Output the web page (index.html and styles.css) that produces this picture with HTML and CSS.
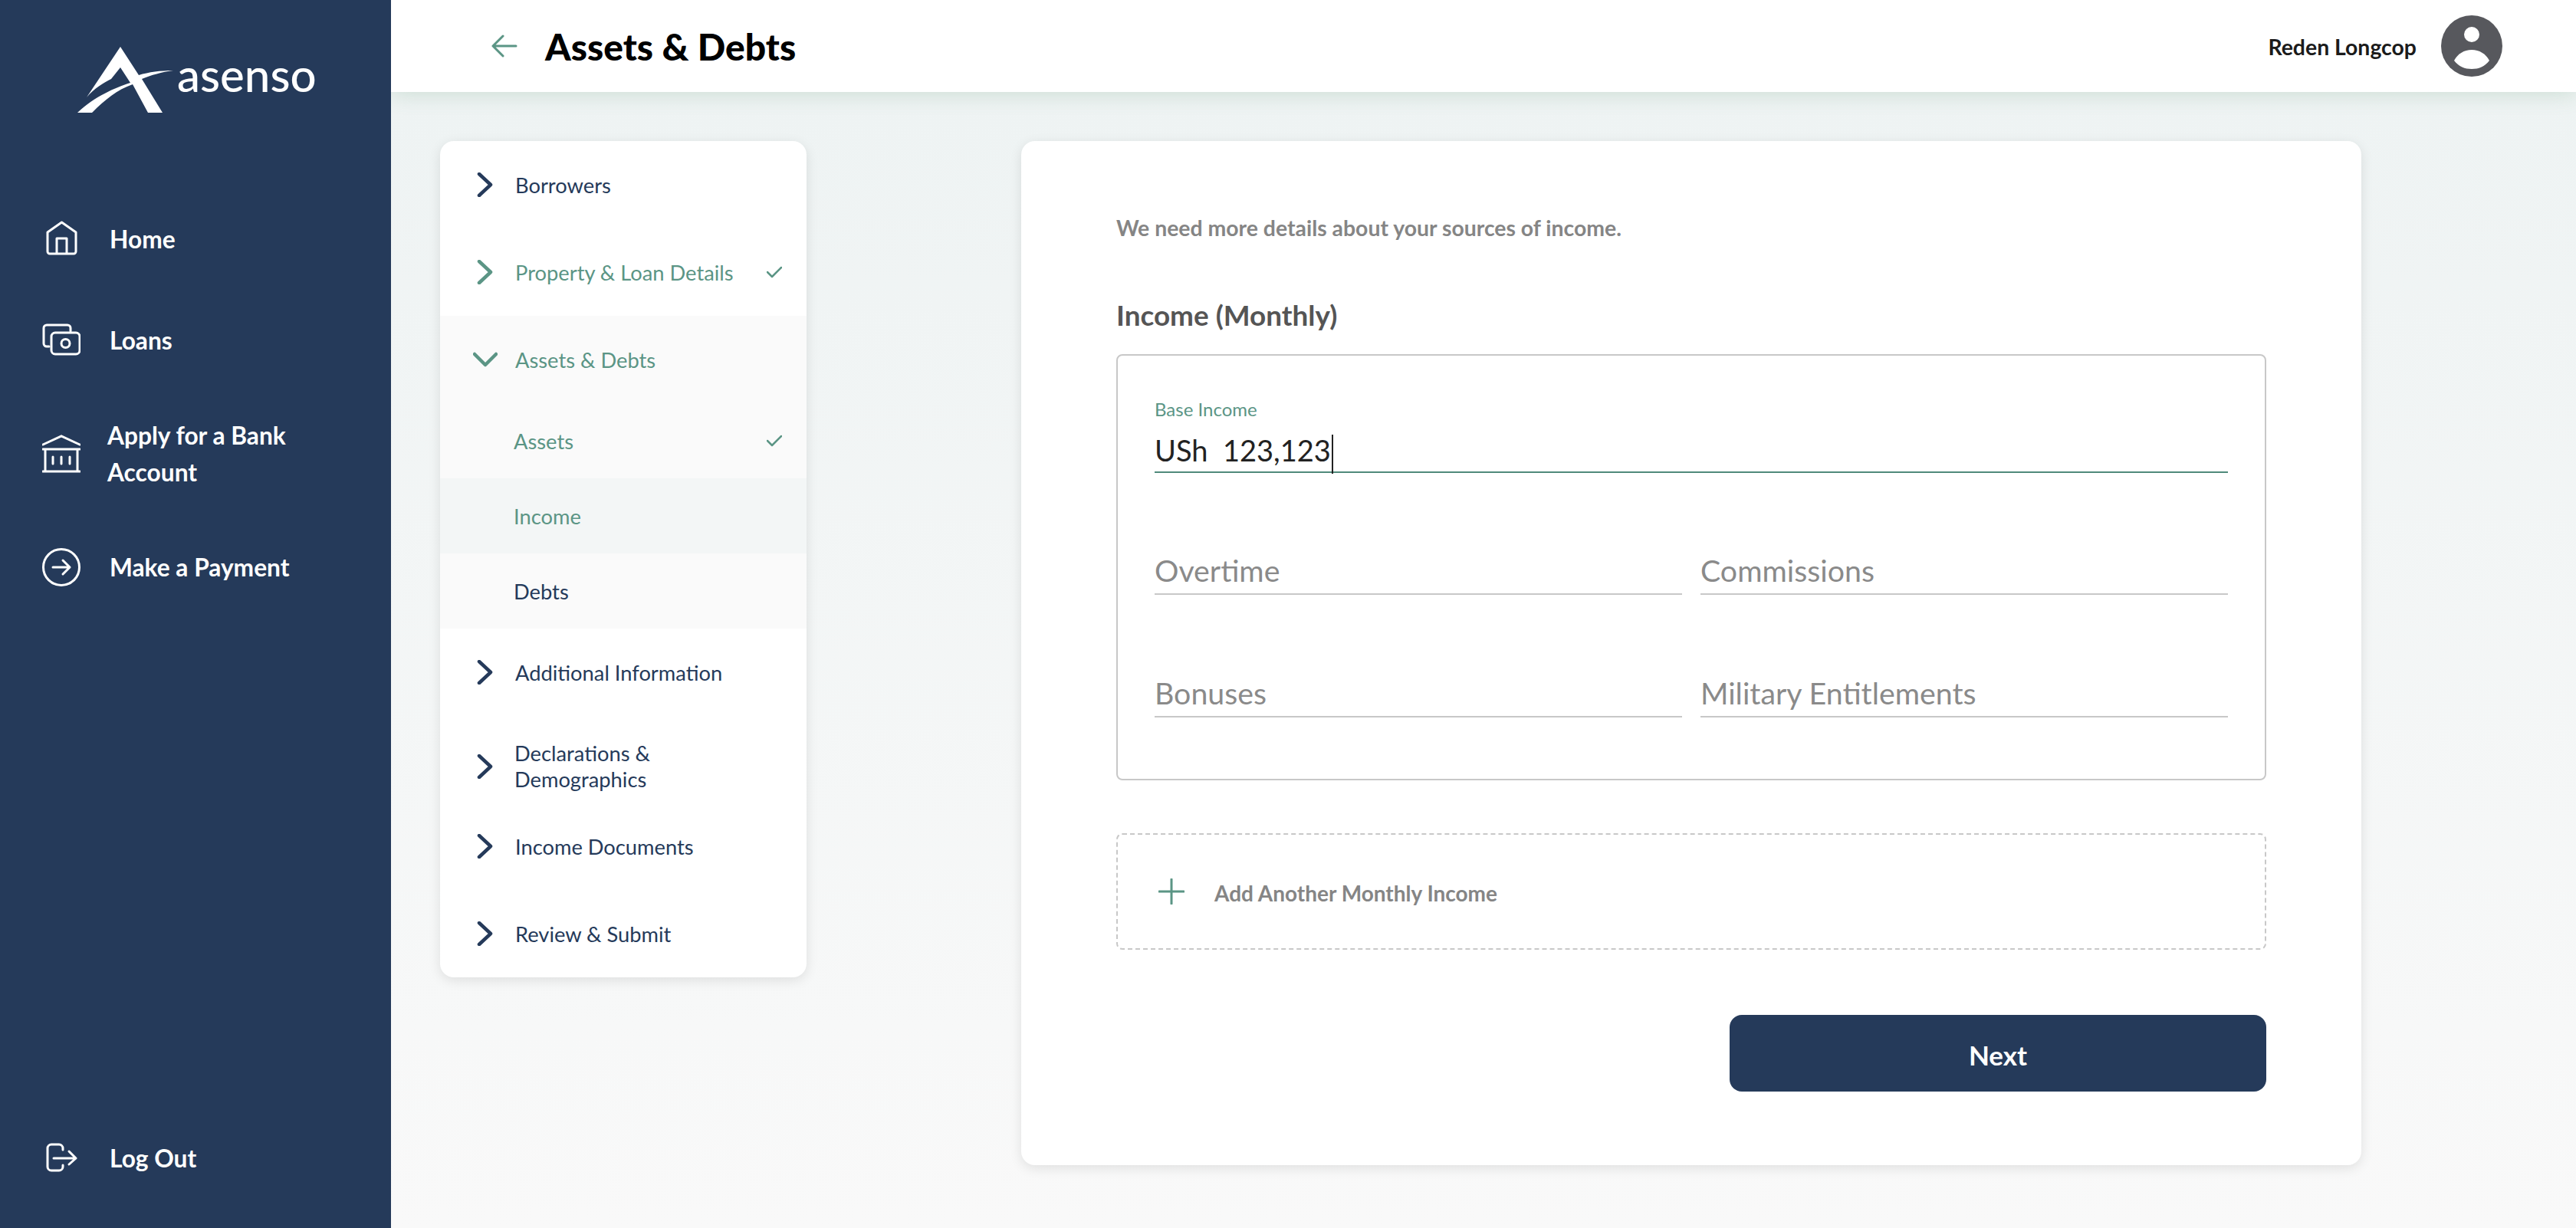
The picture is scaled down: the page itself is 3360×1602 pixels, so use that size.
FILE: index.html
```html
<!DOCTYPE html>
<html lang="en">
<head>
  <meta charset="UTF-8" />
  <title>Assets &amp; Debts</title>
  <link rel="stylesheet" href="styles.css">
</head>
<body>

  <aside class="sidebar">
    <div class="logo">
      <svg class="logo-mark" viewBox="0 0 125 86" width="125" height="86">
        <path fill="#fff" d="M56 0 L12 66 C22 54 34 47 44 42 L56 27 L69 47 C48 54 24 64 0 86 L19 86 C36 69 52 56 72 49 L92 86 L111 86 L84 42 C96 37 110 33 125 31 C108 31 93 33 80 37 Z"/>
      </svg>
      <span class="logo-text">asenso</span>
    </div>

    <nav class="main-nav">
      <a class="nav-item nav-home">
        <svg class="nav-icon" viewBox="0 0 50 50" width="50" height="50" fill="none" stroke="#fff" stroke-width="3" stroke-linejoin="round">
          <path d="M25.500 3 L44 16 V41 a3 3 0 0 1 -3 3 H10 a3 3 0 0 1 -3 -3 V16 Z"/>
          <path d="M19 44 V24 H32 V44"/>
        </svg>
        <span>Home</span>
      </a>
      <a class="nav-item nav-loans">
        <svg class="nav-icon" viewBox="0 0 50 50" width="50" height="50" fill="none" stroke="#fff" stroke-width="3" stroke-linecap="round">
          <path d="M9 33 H6 a4 4 0 0 1 -4 -4 V9 a4 4 0 0 1 4 -4 H33 a4 4 0 0 1 4 4 V13"/>
          <rect x="12" y="15" width="37" height="28" rx="5"/>
          <circle cx="30.5" cy="29" r="5.5"/>
        </svg>
        <span>Loans</span>
      </a>
      <a class="nav-item nav-bank">
        <svg class="nav-icon" viewBox="0 0 50 50" width="50" height="50" fill="none" stroke="#fff" stroke-width="3" stroke-linecap="round">
          <path d="M1 13 L25 2 L49 13"/>
          <path d="M1 19 H49 M4 19 V48 M46 19 V48 M1 48 H49"/>
          <path d="M14 29 V38 M25 29 V38 M36 29 V38"/>
        </svg>
        <span class="nav-wrap">Apply for a Bank Account</span>
      </a>
      <a class="nav-item nav-pay">
        <svg class="nav-icon" viewBox="0 0 50 50" width="50" height="50" fill="none" stroke="#fff" stroke-width="3" stroke-linecap="round" stroke-linejoin="round">
          <circle cx="25" cy="25" r="23.5"/>
          <path d="M14 25 H36 M27 16 L36 25 L27 34"/>
        </svg>
        <span>Make a Payment</span>
      </a>
    </nav>

    <a class="nav-item nav-logout">
      <svg class="nav-icon" viewBox="0 0 50 50" width="50" height="50" fill="none" stroke="#fff" stroke-width="3" stroke-linecap="round" stroke-linejoin="round">
        <path d="M27 14 V12 a5 5 0 0 0 -5 -5 H12 a5 5 0 0 0 -5 5 V36 a5 5 0 0 0 5 5 H22 a5 5 0 0 0 5 -5 V34"/>
        <path d="M15 25 H44 M35 16 L44 25 L35 33"/>
      </svg>
      <span>Log Out</span>
    </a>
  </aside>

  <div class="page">
    <header class="topbar">
      <svg class="back" viewBox="0 0 34 30" width="34" height="30" fill="none" stroke="#5b9585" stroke-width="3" stroke-linecap="round" stroke-linejoin="round">
        <path d="M32 15 H2 M15 2 L2 15 L15 28"/>
      </svg>
      <h1>Assets &amp; Debts</h1>
      <div class="user">
        <span class="user-name">Reden Longcop</span>
        <svg viewBox="0 0 80 80" width="80" height="80">
          <circle cx="40" cy="40" r="40" fill="#57585d"/>
          <circle cx="40" cy="25" r="10" fill="#fff"/>
          <path fill="#fff" d="M17 59 C22 50 30 45 40 45 C50 45 58 50 63 59 C57 67 49 70 40 70 C31 70 23 67 17 59 Z"/>
        </svg>
      </div>
    </header>

    <div class="content">
      <ul class="steps">
        <li class="step"><svg class="chev"><use href="#chev-right"/></svg>Borrowers</li>
        <li class="step done"><svg class="chev"><use href="#chev-right"/></svg>Property &amp; Loan Details<svg class="check"><use href="#check"/></svg></li>
        <li class="step done open"><svg class="chev"><use href="#chev-down"/></svg>Assets &amp; Debts</li>
        <li class="sub done first">Assets<svg class="check"><use href="#check"/></svg></li>
        <li class="sub current">Income</li>
        <li class="sub">Debts</li>
        <li class="step"><svg class="chev"><use href="#chev-right"/></svg>Additional Information</li>
        <li class="step two-line"><svg class="chev"><use href="#chev-right"/></svg><span>Declarations &amp;<br>Demographics</span></li>
        <li class="step docs"><svg class="chev"><use href="#chev-right"/></svg>Income Documents</li>
        <li class="step review"><svg class="chev"><use href="#chev-right"/></svg>Review &amp; Submit</li>
      </ul>

      <main class="card">
        <p class="intro">We need more details about your sources of income.</p>
        <h2>Income (Monthly)</h2>

        <div class="income-box">
          <div class="field active">
            <label>Base Income</label>
            <div class="value">USh&nbsp; 123,123<i class="caret"></i></div>
          </div>
          <div class="field-row">
            <div class="field">Overtime</div>
            <div class="field">Commissions</div>
          </div>
          <div class="field-row">
            <div class="field">Bonuses</div>
            <div class="field">Military Entitlements</div>
          </div>
        </div>

        <div class="add-income">
          <svg viewBox="0 0 34 34" width="34" height="34" fill="none" stroke="#5b9585" stroke-width="3" stroke-linecap="round">
            <path d="M17 1 V33 M1 17 H33"/>
          </svg>
          <span class="add-label">Add Another Monthly Income</span>
        </div>

        <div class="actions">
          <button class="next">Next</button>
        </div>
      </main>
    </div>
  </div>

  <svg width="0" height="0" class="defs">
    <symbol id="chev-right" viewBox="0 0 32 32">
      <path d="M8 2 L23 16 L8 30" fill="none" stroke="currentColor" stroke-width="4.5" stroke-linecap="round" stroke-linejoin="round"/>
    </symbol>
    <symbol id="chev-down" viewBox="0 0 32 32">
      <path d="M2 9 L16 23 L30 9" fill="none" stroke="currentColor" stroke-width="4.5" stroke-linecap="round" stroke-linejoin="round"/>
    </symbol>
    <symbol id="check" viewBox="0 0 20 16">
      <path d="M1 8 L7 14 L19 2" fill="none" stroke="currentColor" stroke-width="2.5" stroke-linecap="round" stroke-linejoin="round"/>
    </symbol>
  </svg>

</body>
</html>
```

FILE: styles.css
```css
* {
  box-sizing: border-box;
}

body {
  margin: 0;
  height: 1602px;
  display: flex;
  overflow: hidden;
  font-family: "Lato", "Noto Sans", sans-serif;
  background: #f9f9f9;
  color: #253a5a;
}

.defs {
  position: absolute;
}

/* sidebar */
.sidebar {
  width: 510px;
  flex-shrink: 0;
  background: #253a5a;
  color: #fff;
  display: flex;
  flex-direction: column;
}

.logo {
  height: 236px;
  padding: 61px 0 0 101px;
  display: flex;
  align-items: flex-start;
  gap: 5px;
}

.logo-text {
  font-size: 60px;
  line-height: 60px;
  font-weight: 500;
  margin-top: 6px;
}

.main-nav {
  display: flex;
  flex-direction: column;
}

.nav-item {
  display: flex;
  align-items: center;
  font-size: 31.7px;
  font-weight: 700;
  padding-left: 55px;
  gap: 38px;
}

.nav-icon {
  flex-shrink: 0;
}

.nav-home { height: 152px; }
.nav-loans { height: 112px; }
.nav-bank { height: 184px; gap: 35px; }
.nav-pay { height: 112px; }

.nav-wrap {
  width: 270px;
  line-height: 48px;
}

.nav-logout {
  margin-top: auto;
  height: 90px;
  margin-bottom: 46px;
}

/* header */
.page {
  flex: 1;
  display: flex;
  flex-direction: column;
  min-width: 0;
  overflow: hidden;
}

.topbar {
  height: 120px;
  flex-shrink: 0;
  background: #fff;
  display: flex;
  align-items: center;
  padding: 0 96px 0 131px;
  position: relative;
  box-shadow: 0 2px 26px rgba(90, 150, 110, 0.24);
}

h1 {
  margin: 1px 0 0 36px;
  font-size: 48px;
  font-weight: 900;
  color: #000;
}

.user {
  margin-left: auto;
  display: flex;
  align-items: center;
  gap: 32px;
}

.user-name {
  font-size: 28.4px;
  font-weight: 700;
  color: #1b1b1b;
  margin-top: 1px;
}

/* content */
.content {
  flex: 1;
  padding: 64px 280px 0 64px;
  display: flex;
  align-items: flex-start;
  justify-content: space-between;
  background: linear-gradient(#eef3f3, #f9f9f9);
}

.steps {
  list-style: none;
  margin: 0;
  padding: 0;
  width: 478px;
  background: #fff;
  border-radius: 18px;
  box-shadow: 0 4px 16px rgba(0, 0, 0, 0.1);
  overflow: hidden;
  font-size: 27.3px;
}

.step {
  height: 114px;
  display: flex;
  align-items: center;
  padding-left: 43px;
  gap: 23px;
}

.chev {
  width: 32px;
  height: 32px;
  flex-shrink: 0;
  color: #253a5a;
}

.check {
  width: 20px;
  height: 16px;
  position: absolute;
  right: 32px;
  top: 50%;
  margin-top: -8px;
  color: #5b9585;
}

.step, .sub {
  position: relative;
}

.done, .done .chev, .current {
  color: #5b9585;
}

.open {
  background: #fafafa;
}

.sub {
  height: 98px;
  display: flex;
  align-items: center;
  padding-left: 96px;
  background: #fafafa;
}

.sub.current {
  background: #f3f6f6;
}

.two-line {
  height: 132px;
  line-height: 34px;
  gap: 22px;
}

.docs {
  height: 76px;
}

.review {
  height: 133px;
  padding-top: 19px;
}

.card {
  width: 1748px;
  height: 1336px;
  background: #fff;
  border-radius: 18px;
  box-shadow: 0 4px 16px rgba(0, 0, 0, 0.1);
  padding: 0 124px;
}

.intro {
  margin: 0;
  padding-top: 97px;
  font-size: 28.4px;
  line-height: 32px;
  font-weight: 700;
  color: #858585;
}

h2 {
  margin: 0;
  padding-top: 76px;
  font-size: 36.9px;
  line-height: 44px;
  font-weight: 700;
  color: #555;
}

.income-box {
  margin-top: 29px;
  height: 556px;
  border: 2px solid #c8c8c8;
  border-radius: 8px;
  padding: 52px 48px 0;
}

.field {
  flex: 1;
  height: 46px;
  border-bottom: 2px solid #c8c8c8;
  font-size: 39.3px;
  line-height: 28px;
  color: #8a8a8a;
}

.field.active {
  height: 101px;
  border-bottom-color: #4f8a7b;
  font-size: 38px;
  color: #222;
}

.field.active label {
  display: block;
  font-size: 24px;
  line-height: 36px;
  color: #5b9585;
}

.value {
  line-height: 70px;
}

.caret {
  display: inline-block;
  width: 2px;
  height: 51px;
  background: #222;
  vertical-align: middle;
  margin-left: 1px;
}

.field-row {
  display: flex;
  gap: 24px;
  margin-top: 113px;
}

.field-row + .field-row {
  margin-top: 114px;
}

.add-income {
  margin-top: 69px;
  height: 152px;
  border: 2px dashed #c8c8c8;
  border-radius: 8px;
  display: flex;
  align-items: center;
  padding-left: 53px;
  gap: 39px;
  font-size: 28px;
  font-weight: 700;
  color: #858585;
}

.add-label {
  padding-top: 3px;
}

.actions {
  margin-top: 85px;
  display: flex;
  justify-content: flex-end;
}

.next {
  width: 700px;
  height: 100px;
  padding: 3px 0 0;
  border: none;
  border-radius: 16px;
  background: #253a5a;
  color: #fff;
  font-family: inherit;
  font-size: 35px;
  font-weight: 700;
}
```
